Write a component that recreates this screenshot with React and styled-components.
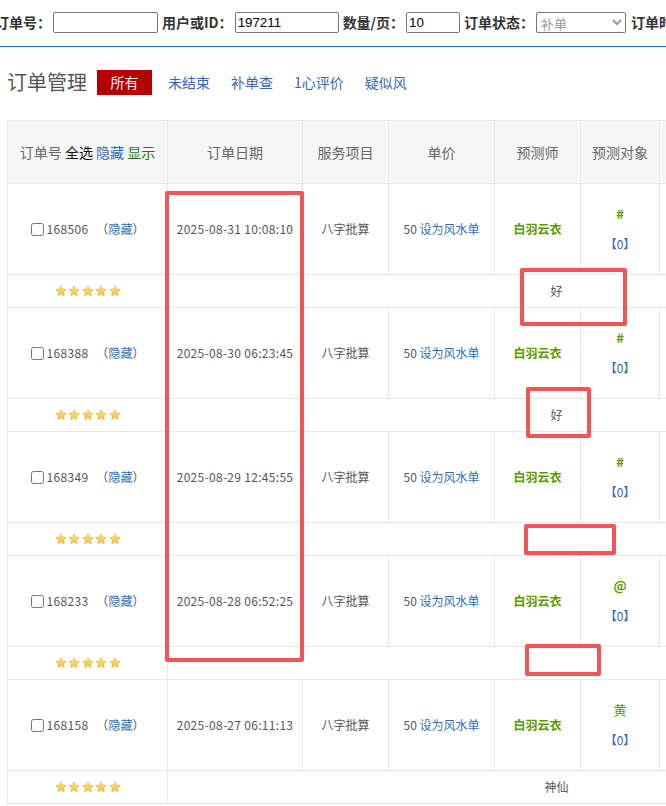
import React from "react";
import styled, { createGlobalStyle } from "styled-components";

const GlobalStyle = createGlobalStyle`
  html, body {
    margin: 0;
    padding: 0;
    background: #fff;
    overflow: hidden;
  }
  body {
    font-family: "Microsoft YaHei", "Noto Sans CJK SC", sans-serif;
    color: #555;
  }
`;

const orders = [
  { id: "168506", date: "2025-08-31 10:08:10", target: "#", mark: true, comment: "好" },
  { id: "168388", date: "2025-08-30 06:23:45", target: "#", mark: true, comment: "好" },
  { id: "168349", date: "2025-08-29 12:45:55", target: "#", mark: true, comment: "" },
  { id: "168233", date: "2025-08-28 06:52:25", target: "@", mark: true, comment: "" },
  { id: "168158", date: "2025-08-27 06:11:13", target: "黄", mark: false, comment: "神仙" },
];

// red review marks drawn over the screenshot
const marks = [
  { left: 165, top: 191, width: 139, height: 471 },
  { left: 520, top: 268, width: 107, height: 58 },
  { left: 526, top: 387, width: 65, height: 51 },
  { left: 524, top: 524, width: 92, height: 31 },
  { left: 525, top: 644, width: 76, height: 32 },
];

function Star() {
  return (
    <svg width="12" height="12" viewBox="0 0 24 24">
      <defs>
        <linearGradient id="sg" x1="0" y1="0" x2="0" y2="1">
          <stop offset="0" stopColor="#ffe683" />
          <stop offset="1" stopColor="#f5c03e" />
        </linearGradient>
      </defs>
      <path
        d="M12 1.5l3.1 6.9 7.4.7-5.6 5 1.7 7.4L12 17.7l-6.6 3.8 1.7-7.4-5.6-5 7.4-.7z"
        fill="url(#sg)"
        stroke="#e6ac2c"
        strokeWidth="1.2"
        strokeLinejoin="round"
      />
    </svg>
  );
}

export default function App() {
  return (
    <Page>
      <GlobalStyle />
      <FilterBar>
        <Label>订单号：</Label>
        <Field width={105} />
        <Label>用户或ID：</Label>
        <Field width={104} defaultValue="197211" />
        <Label>数量/页：</Label>
        <Field width={54} defaultValue="10" />
        <Label>订单状态：</Label>
        <Select defaultValue="bd">
          <option value="bd">补单</option>
        </Select>
        <Label>订单时间：</Label>
      </FilterBar>

      <TitleRow>
        <Title>订单管理</Title>
        <ActiveTab>所有</ActiveTab>
        <Tabs>
          <TabLink>未结束</TabLink>
          <TabLink>补单查</TabLink>
          <TabLink>1心评价</TabLink>
          <TabLink>疑似风</TabLink>
        </Tabs>
      </TitleRow>

      <Table>
        <colgroup>
          <col style={{ width: 160 }} />
          <col style={{ width: 135 }} />
          <col style={{ width: 86 }} />
          <col style={{ width: 106 }} />
          <col style={{ width: 86 }} />
          <col style={{ width: 79 }} />
          <col style={{ width: 143 }} />
          <col style={{ width: 143 }} />
        </colgroup>
        <thead>
          <tr>
            <Th>
              订单号 <Ink color="#111">全选</Ink> <Ink color="#2e6db6">隐藏</Ink>{" "}
              <Ink color="#1a7a10">显示</Ink>
            </Th>
            <Th>订单日期</Th>
            <Th>服务项目</Th>
            <Th>单价</Th>
            <Th>预测师</Th>
            <Th>预测对象</Th>
            <Th>订单状态</Th>
            <Th>操作</Th>
          </tr>
        </thead>
        <tbody>
          {orders.map((o) => (
            <React.Fragment key={o.id}>
              <MainRow>
                <Td>
                  <IdCell>
                    <Check type="checkbox" />
                    <Digits>{o.id}</Digits>
                    <HideLink>
                      <Paren>（</Paren>隐藏<Paren>）</Paren>
                    </HideLink>
                  </IdCell>
                </Td>
                <Td>
                  <Digits>{o.date}</Digits>
                </Td>
                <Td>八字批算</Td>
                <Td>
                  50 <Ink color="#2e6db6">设为风水单</Ink>
                </Td>
                <Td>
                  <Master>白羽云衣</Master>
                </Td>
                <Td>
                  <TargetLine color="#5a9a00" big bold={o.mark}>
                    {o.target}
                  </TargetLine>
                  <TargetLine color="#2e6db6">【0】</TargetLine>
                </Td>
                <Td />
                <Td />
              </MainRow>
              <SubRow>
                <Td>
                  <Stars>
                    {[0, 1, 2, 3, 4].map((i) => (
                      <Star key={i} />
                    ))}
                  </Stars>
                </Td>
                <Td colSpan={7}>{o.comment}</Td>
              </SubRow>
            </React.Fragment>
          ))}
        </tbody>
      </Table>

      {marks.map((m, i) => (
        <Mark
          key={i}
          style={{ left: m.left, top: m.top, width: m.width, height: m.height }}
        />
      ))}
    </Page>
  );
}

const Page = styled.div`
  position: relative;
  width: 666px;
  height: 806px;
  overflow: hidden;
`;

const FilterBar = styled.div`
  display: flex;
  align-items: center;
  margin-left: -5px;
  padding: 12px 0 13px;
  border-bottom: 1px solid #2267b0;
  white-space: nowrap;
  width: 900px;
`;

const Label = styled.span`
  font-size: 14px;
  font-weight: bold;
  color: #333;
  line-height: 21px;
  margin-right: 2px;
`;

const Field = styled.input`
  box-sizing: border-box;
  width: ${(p) => p.width}px;
  height: 21px;
  margin: 0 4px 0 0;
  padding: 1px 2px;
  border: 1px solid #767676;
  border-radius: 2px;
  font-family: "Liberation Sans", Arial, sans-serif;
  font-size: 13.33px;
  color: #000;
`;

const Select = styled.select`
  box-sizing: border-box;
  width: 90px;
  height: 21px;
  margin: 0 5px 0 0;
  border: 1px solid #767676;
  border-radius: 2px;
  font-family: "Microsoft YaHei", "Noto Sans CJK SC", sans-serif;
  font-size: 13px;
  color: #999;
  background: #fff;
`;

const TitleRow = styled.div`
  display: flex;
  align-items: center;
  height: 36px;
  margin: 17px 0 20px 7px;
`;

const Title = styled.h2`
  margin: 0 10px 0 0;
  font-size: 20px;
  font-weight: normal;
  line-height: 24px;
  color: #555;
`;

const ActiveTab = styled.span`
  display: inline-flex;
  align-items: center;
  justify-content: center;
  width: 55px;
  height: 25px;
  background: #b40000;
  color: #fff;
  font-size: 14px;
`;

const Tabs = styled.div`
  display: flex;
  gap: 21px;
  margin-left: 16px;
`;

const TabLink = styled.a`
  font-size: 14px;
  line-height: 20px;
  color: #3468b3;
  cursor: pointer;
`;

const Table = styled.table`
  margin-left: 7px;
  width: 938px;
  table-layout: fixed;
  border-collapse: collapse;
  border: 1px solid #e8e8e8;
  font-size: 12px;
  color: #555;
`;

const Th = styled.th`
  height: 62px;
  padding: 0;
  background: #f6f6f6;
  border: 1px solid #e8e8e8;
  font-size: 14px;
  font-weight: normal;
  color: #666;
  text-align: center;
  white-space: nowrap;
`;

const MainRow = styled.tr`
  height: 91px;
`;

const SubRow = styled.tr`
  height: 33px;
`;

const Td = styled.td`
  padding: 0;
  border: 1px solid #e8e8e8;
  text-align: center;
  vertical-align: middle;
  line-height: 18px;
  white-space: nowrap;
`;

const Digits = styled.span`
  letter-spacing: 0.3px;
`;

const Ink = styled.span`
  color: ${(p) => p.color};
`;

const IdCell = styled.div`
  display: flex;
  align-items: center;
  justify-content: center;
`;

const Check = styled.input`
  width: 13px;
  height: 13px;
  margin: 0 3px 0 0;
`;

const HideLink = styled.a`
  color: #2e6db6;
  margin-left: 8px;
  cursor: pointer;
`;

const Paren = styled.span`
  color: #556;
`;

const Master = styled.span`
  color: #5a9a00;
  font-weight: bold;
`;

const TargetLine = styled.div`
  line-height: 30px;
  font-size: ${(p) => (p.big ? "13px" : "12px")};
  font-weight: ${(p) => (p.bold ? "bold" : "normal")};
  color: ${(p) => p.color};
`;

const Stars = styled.div`
  display: flex;
  justify-content: center;
  gap: 1.5px;
`;

const Mark = styled.div`
  position: absolute;
  box-sizing: border-box;
  border: 4px solid #f05656;
  border-radius: 2px;
  pointer-events: none;
`;
